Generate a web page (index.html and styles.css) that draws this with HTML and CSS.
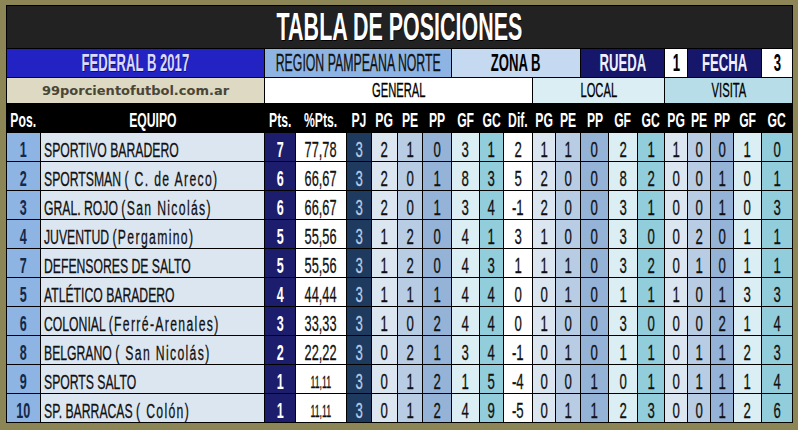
FILE: index.html
```html
<!DOCTYPE html>
<html lang="es">
<head>
<meta charset="utf-8">
<title>Tabla de posiciones</title>
<link rel="stylesheet" href="styles.css">
</head>
<body>
<div class="board">
  <div class="title"><span>TABLA DE POSICIONES</span></div>
  <div class="grid">
    <div class="r2 fed"><span>FEDERAL B 2017</span></div>
    <div class="r2 reg"><span>REGION PAMPEANA NORTE</span></div>
    <div class="r2 zona"><span>ZONA B</span></div>
    <div class="r2 rueda"><span>RUEDA</span></div>
    <div class="r2 n1"><span>1</span></div>
    <div class="r2 fecha"><span>FECHA</span></div>
    <div class="r2 n3"><span>3</span></div>

    <div class="r3 site">99porcientofutbol.com.ar</div>
    <div class="r3 gen"><span>GENERAL</span></div>
    <div class="r3 loc"><span>LOCAL</span></div>
    <div class="r3 vis"><span>VISITA</span></div>

    <div class="hrow">
      <div><span>Pos.</span></div><div><span>EQUIPO</span></div><div><span>Pts.</span></div><div><span>%Pts.</span></div><div><span>PJ</span></div>
      <div><span>PG</span></div><div><span>PE</span></div><div><span>PP</span></div><div><span>GF</span></div><div><span>GC</span></div><div><span>Dif.</span></div>
      <div><span>PG</span></div><div><span>PE</span></div><div><span>PP</span></div><div><span>GF</span></div><div><span>GC</span></div>
      <div><span>PG</span></div><div><span>PE</span></div><div><span>PP</span></div><div><span>GF</span></div><div><span>GC</span></div>
    </div>

    <div class="row">
      <div><span>1</span></div><div><span>SPORTIVO BARADERO</span></div><div><span>7</span></div><div><span>77,78</span></div><div><span>3</span></div>
      <div><span>2</span></div><div><span>1</span></div><div><span>0</span></div><div><span>3</span></div><div><span>1</span></div><div><span>2</span></div>
      <div><span>1</span></div><div><span>1</span></div><div><span>0</span></div><div><span>2</span></div><div><span>1</span></div>
      <div><span>1</span></div><div><span>0</span></div><div><span>0</span></div><div><span>1</span></div><div><span>0</span></div>
    </div>
    <div class="row">
      <div><span>2</span></div><div><span>SPORTSMAN <em>( C. de Areco)</em></span></div><div><span>6</span></div><div><span>66,67</span></div><div><span>3</span></div>
      <div><span>2</span></div><div><span>0</span></div><div><span>1</span></div><div><span>8</span></div><div><span>3</span></div><div><span>5</span></div>
      <div><span>2</span></div><div><span>0</span></div><div><span>0</span></div><div><span>8</span></div><div><span>2</span></div>
      <div><span>0</span></div><div><span>0</span></div><div><span>1</span></div><div><span>0</span></div><div><span>1</span></div>
    </div>
    <div class="row">
      <div><span>3</span></div><div><span>GRAL. ROJO <em>(San Nicolás)</em></span></div><div><span>6</span></div><div><span>66,67</span></div><div><span>3</span></div>
      <div><span>2</span></div><div><span>0</span></div><div><span>1</span></div><div><span>3</span></div><div><span>4</span></div><div><span>-1</span></div>
      <div><span>2</span></div><div><span>0</span></div><div><span>0</span></div><div><span>3</span></div><div><span>1</span></div>
      <div><span>0</span></div><div><span>0</span></div><div><span>1</span></div><div><span>0</span></div><div><span>3</span></div>
    </div>
    <div class="row">
      <div><span>4</span></div><div><span>JUVENTUD <em>(Pergamino)</em></span></div><div><span>5</span></div><div><span>55,56</span></div><div><span>3</span></div>
      <div><span>1</span></div><div><span>2</span></div><div><span>0</span></div><div><span>4</span></div><div><span>1</span></div><div><span>3</span></div>
      <div><span>1</span></div><div><span>0</span></div><div><span>0</span></div><div><span>3</span></div><div><span>0</span></div>
      <div><span>0</span></div><div><span>2</span></div><div><span>0</span></div><div><span>1</span></div><div><span>1</span></div>
    </div>
    <div class="row">
      <div><span>7</span></div><div><span>DEFENSORES DE SALTO</span></div><div><span>5</span></div><div><span>55,56</span></div><div><span>3</span></div>
      <div><span>1</span></div><div><span>2</span></div><div><span>0</span></div><div><span>4</span></div><div><span>3</span></div><div><span>1</span></div>
      <div><span>1</span></div><div><span>1</span></div><div><span>0</span></div><div><span>3</span></div><div><span>2</span></div>
      <div><span>0</span></div><div><span>1</span></div><div><span>0</span></div><div><span>1</span></div><div><span>1</span></div>
    </div>
    <div class="row">
      <div><span>5</span></div><div><span>ATLÉTICO BARADERO</span></div><div><span>4</span></div><div><span>44,44</span></div><div><span>3</span></div>
      <div><span>1</span></div><div><span>1</span></div><div><span>1</span></div><div><span>4</span></div><div><span>4</span></div><div><span>0</span></div>
      <div><span>0</span></div><div><span>1</span></div><div><span>0</span></div><div><span>1</span></div><div><span>1</span></div>
      <div><span>1</span></div><div><span>0</span></div><div><span>1</span></div><div><span>3</span></div><div><span>3</span></div>
    </div>
    <div class="row">
      <div><span>6</span></div><div><span>COLONIAL <em>(Ferré-Arenales)</em></span></div><div><span>3</span></div><div><span>33,33</span></div><div><span>3</span></div>
      <div><span>1</span></div><div><span>0</span></div><div><span>2</span></div><div><span>4</span></div><div><span>4</span></div><div><span>0</span></div>
      <div><span>1</span></div><div><span>0</span></div><div><span>0</span></div><div><span>3</span></div><div><span>0</span></div>
      <div><span>0</span></div><div><span>0</span></div><div><span>2</span></div><div><span>1</span></div><div><span>4</span></div>
    </div>
    <div class="row">
      <div><span>8</span></div><div><span>BELGRANO <em>( San Nicolás)</em></span></div><div><span>2</span></div><div><span>22,22</span></div><div><span>3</span></div>
      <div><span>0</span></div><div><span>2</span></div><div><span>1</span></div><div><span>3</span></div><div><span>4</span></div><div><span>-1</span></div>
      <div><span>0</span></div><div><span>1</span></div><div><span>0</span></div><div><span>1</span></div><div><span>1</span></div>
      <div><span>0</span></div><div><span>1</span></div><div><span>1</span></div><div><span>2</span></div><div><span>3</span></div>
    </div>
    <div class="row">
      <div><span>9</span></div><div><span>SPORTS SALTO</span></div><div><span>1</span></div><div class="sm"><span>11,11</span></div><div><span>3</span></div>
      <div><span>0</span></div><div><span>1</span></div><div><span>2</span></div><div><span>1</span></div><div><span>5</span></div><div><span>-4</span></div>
      <div><span>0</span></div><div><span>0</span></div><div><span>1</span></div><div><span>0</span></div><div><span>1</span></div>
      <div><span>0</span></div><div><span>1</span></div><div><span>1</span></div><div><span>1</span></div><div><span>4</span></div>
    </div>
    <div class="row">
      <div><span>10</span></div><div><span>SP. BARRACAS <em>( Colón)</em></span></div><div><span>1</span></div><div class="sm"><span>11,11</span></div><div><span>3</span></div>
      <div><span>0</span></div><div><span>1</span></div><div><span>2</span></div><div><span>4</span></div><div><span>9</span></div><div><span>-5</span></div>
      <div><span>0</span></div><div><span>1</span></div><div><span>1</span></div><div><span>2</span></div><div><span>3</span></div>
      <div><span>0</span></div><div><span>0</span></div><div><span>1</span></div><div><span>2</span></div><div><span>6</span></div>
    </div>
  </div>
</div>
</body>
</html>
```
FILE: styles.css
```css
* { box-sizing: border-box; }
html, body { margin: 0; padding: 0; }
body {
  background: #8c8556;
  width: 798px;
  height: 430px;
  overflow: hidden;
  font-family: "Liberation Sans", Arial, sans-serif;
}
.board {
  margin: 5px 0 0 6px;
  width: 787px;
  border-top: 1px solid #000;
  border-left: 1px solid #000;
}
.title {
  height: 43px;
  background: #222;
  border-right: 1px solid #000;
  border-bottom: 1px solid #000;
  display: flex;
  align-items: center;
  justify-content: center;
}
.title span {
  display: inline-block;
  font-size: 38px;
  font-weight: bold;
  color: #fff;
  white-space: nowrap;
  transform: scaleX(.565);
  text-shadow: 1px 1px 0 #000;
}
.grid {
  display: grid;
  grid-template-columns: 34px 224px 31px 51px 25px 26px 25px 29px 28px 24px 29px 23px 25px 28px 29px 27px 23px 23px 23px 28px 31px;
  grid-template-rows: 29px 26px 29px repeat(10, 29px);
}
.row, .hrow { display: contents; }
.grid > div:not(.row):not(.hrow),
.row > div,
.hrow > div {
  border-right: 1px solid #000;
  border-bottom: 1px solid #000;
  display: flex;
  align-items: center;
  justify-content: center;
  white-space: nowrap;
  min-width: 0;
}
.grid span {
  display: inline-block;
  transform: scaleX(.6);
}

/* second header row */
.r2 { font-size: 23px; }
.r2 span { transform: scaleX(.57); }
.fed { grid-column: 1 / 3; background: #2323c4; color: #dcdaff; font-weight: bold; }
.fed span { text-shadow: 1px 1px 0 #101060; }
.reg { grid-column: 3 / 9; background: #8db4e2; color: #111; -webkit-text-stroke: .3px #111; }
.reg span { transform: scaleX(.535); }
.zona { grid-column: 9 / 14; background: #c5d9f1; color: #000; font-weight: bold; }
.rueda { grid-column: 14 / 17; background: #16166a; color: #f0f0ff; font-weight: bold; }
.n1 { grid-column: 17 / 18; background: #fff; color: #000; font-weight: bold; }
.fecha { grid-column: 18 / 21; background: #16166a; color: #f0f0ff; font-weight: bold; }
.n3 { grid-column: 21 / 22; background: #fff; color: #000; font-weight: bold; }

/* third header row */
.r3 { font-size: 20px; color: #000; }
.r3 span { transform: scaleX(.56); }
.gen, .loc, .vis { -webkit-text-stroke: .3px #000; }
.site {
  grid-column: 1 / 3;
  background: #ddd9c3;
  color: #4a4636;
  font-family: "DejaVu Sans", sans-serif;
  font-weight: bold;
  font-size: 13px;
}
.gen { grid-column: 3 / 12; background: #fff; }
.loc { grid-column: 12 / 17; background: #daeef3; }
.vis { grid-column: 17 / 22; background: #b7dee8; }

/* column titles */
.hrow > div {
  background: #000;
  color: #fff;
  font-weight: bold;
  font-size: 21px;
  padding-top: 4px;
}
.hrow span { transform: scaleX(.58); }

/* data rows */
.row > div {
  font-size: 22px;
  color: #111;
  padding-top: 6px;
  -webkit-text-stroke: .3px currentColor;
}
.row > div:nth-child(1) { background: #8db4e2; color: #13284a; font-weight: bold; -webkit-text-stroke: 0; }
.row > div:nth-child(1) span { transform: scaleX(.57); }
.row > div:nth-child(2) {
  background: #dce6f1;
  justify-content: flex-start;
  padding-left: 3px;
  font-size: 20px;
}
.row > div:nth-child(2) span { transform-origin: 0 50%; transform: scaleX(.61); }
.row em { font-style: normal; letter-spacing: 2.2px; }
.row > div:nth-child(3) { background: #1d1d6d; color: #fff; font-weight: bold; -webkit-text-stroke: 0; }
.row > div:nth-child(3) span { transform: scaleX(.57); }
.row > div:nth-child(4) { background: #fff; }
.row > div:nth-child(4) span { transform: scaleX(.58); }
.row > div.sm { font-size: 16px; padding-top: 8px; }
.row > div.sm span { transform: scaleX(.55); }
.row > div:nth-child(5) { background: #1f3a5f; color: #b8cce4; }
.row > div:nth-child(6),
.row > div:nth-child(12),
.row > div:nth-child(17) { background: #dce6f1; }
.row > div:nth-child(7),
.row > div:nth-child(13),
.row > div:nth-child(18) { background: #b8cce4; }
.row > div:nth-child(8),
.row > div:nth-child(14),
.row > div:nth-child(19) { background: #95b3d7; }
.row > div:nth-child(9),
.row > div:nth-child(15),
.row > div:nth-child(20) { background: #daeef3; }
.row > div:nth-child(10),
.row > div:nth-child(16),
.row > div:nth-child(21) { background: #92cddc; }
.row > div:nth-child(11) { background: #fff; }
```
